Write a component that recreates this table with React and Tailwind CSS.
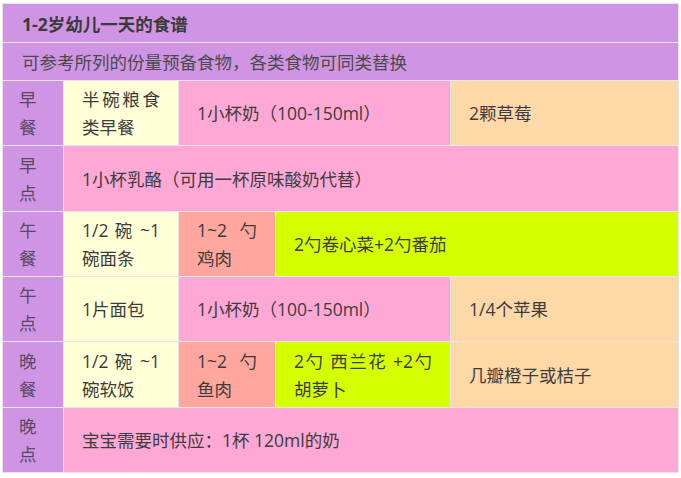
const PURPLE = "bg-[#cf95e4]";
const PINK = "bg-[#ffa8d5]";
const CREAM = "bg-[#ffffd8]";
const SALMON = "bg-[#ffa69e]";
const LIME = "bg-[#d4ff00]";
const PEACH = "bg-[#ffd8a8]";

const Cell = ({ bg, colSpan, children }) => (
  <td
    colSpan={colSpan}
    className={`${bg} border border-[#e6e6e6] px-[18px] align-middle text-justify`}
  >
    {children}
  </td>
);

// two-line cell, first line stretched like the justified original
const Lines = ({ first, second }) => (
  <>
    <span className="block [text-align-last:justify]">{first}</span>
    <span className="block">{second}</span>
  </>
);

const Meal = ({ name }) => (
  <td className={`${PURPLE} border border-[#e6e6e6] pl-[16px] pr-[10px] align-middle text-[#5a4860]`}>
    <span className="block">{name[0]}</span>
    <span className="block">{name[1]}</span>
  </td>
);

const App = () => {
  return (
    <div className="bg-white w-[681px] h-[478px] pt-[3px] pl-[2px] font-['Open_Sans','Noto_Sans_CJK_SC',sans-serif] text-[17.5px] leading-[28px] text-[#3c3c3c]">
      <table className="table-fixed border-collapse w-[676px]">
        <colgroup>
          <col className="w-[61px]" />
          <col className="w-[115px]" />
          <col className="w-[97px]" />
          <col className="w-[175px]" />
          <col className="w-[228px]" />
        </colgroup>
        <tbody>
          <tr className="h-[39px]">
            <td colSpan={5} className={`${PURPLE} border border-[#e6e6e6] px-[19px] pt-[2px] font-bold text-[#3a3a3a]`}>
              1-2岁幼儿一天的食谱
            </td>
          </tr>
          <tr className="h-[38px]">
            <td colSpan={5} className={`${PURPLE} border border-[#e6e6e6] px-[19px] text-[#4a4a4a]`}>
              可参考所列的份量预备食物，各类食物可同类替换
            </td>
          </tr>
          <tr className="h-[65px]">
            <Meal name="早餐" />
            <Cell bg={CREAM}>
              <Lines first="半碗粮食" second="类早餐" />
            </Cell>
            <Cell bg={PINK} colSpan={2}>1小杯奶（100-150ml）</Cell>
            <Cell bg={PEACH}>2颗草莓</Cell>
          </tr>
          <tr className="h-[66px]">
            <Meal name="早点" />
            <Cell bg={PINK} colSpan={4}>1小杯乳酪（可用一杯原味酸奶代替）</Cell>
          </tr>
          <tr className="h-[65px]">
            <Meal name="午餐" />
            <Cell bg={CREAM}>
              <Lines first="1/2 碗 ~1" second="碗面条" />
            </Cell>
            <Cell bg={SALMON}>
              <Lines first="1~2 勺" second="鸡肉" />
            </Cell>
            <Cell bg={LIME} colSpan={2}>2勺卷心菜+2勺番茄</Cell>
          </tr>
          <tr className="h-[65px]">
            <Meal name="午点" />
            <Cell bg={CREAM}>1片面包</Cell>
            <Cell bg={PINK} colSpan={2}>1小杯奶（100-150ml）</Cell>
            <Cell bg={PEACH}>1/4个苹果</Cell>
          </tr>
          <tr className="h-[66px]">
            <Meal name="晚餐" />
            <Cell bg={CREAM}>
              <Lines first="1/2 碗 ~1" second="碗软饭" />
            </Cell>
            <Cell bg={SALMON}>
              <Lines first="1~2 勺" second="鱼肉" />
            </Cell>
            <Cell bg={LIME}>
              <Lines first="2勺 西兰花 +2勺" second="胡萝卜" />
            </Cell>
            <Cell bg={PEACH}>几瓣橙子或桔子</Cell>
          </tr>
          <tr className="h-[65px]">
            <Meal name="晚点" />
            <Cell bg={PINK} colSpan={4}>宝宝需要时供应：1杯 120ml的奶</Cell>
          </tr>
        </tbody>
      </table>
    </div>
  );
};

export default App;
